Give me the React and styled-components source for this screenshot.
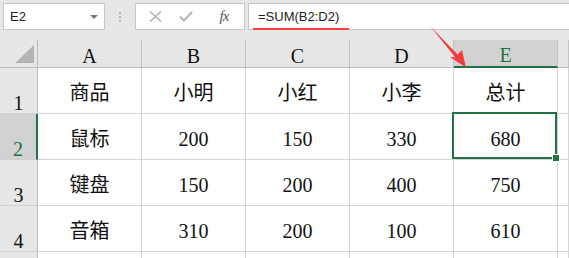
import React from 'react';
import styled, { createGlobalStyle, css } from 'styled-components';

const GlobalStyle = createGlobalStyle`
  html, body {
    margin: 0;
    padding: 0;
    background: #ffffff;
  }
`;

const GREEN = '#217346';
const CELL_FONT = `"Liberation Serif", "Noto Sans CJK SC", serif`;

// Page frame
const Sheet = styled.div`
  position: relative;
  width: 569px;
  height: 258px;
  overflow: hidden;
  background: #e6e6e6;
  font-family: "Liberation Sans", "Noto Sans CJK SC", sans-serif;
`;

// Name box + formula bar
const Toolbar = styled.div`
  display: flex;
  align-items: flex-start;
  height: 40px;
  padding: 3px 0 0 3px;
  box-sizing: border-box;
`;

const NameBox = styled.div`
  display: flex;
  align-items: center;
  justify-content: space-between;
  width: 102px;
  height: 27px;
  box-sizing: border-box;
  padding: 0 6px 0 6px;
  background: #fff;
  border: 1px solid #c6c6c6;
  font-size: 13px;
  color: #222;
`;

const Divider = styled.div`
  display: flex;
  flex-direction: column;
  align-items: center;
  gap: 2px;
  width: 30px;
  padding-top: 9px;
`;

const Dot = styled.span`
  width: 2px;
  height: 2px;
  background: #b4b4b4;
`;

const ButtonBox = styled.div`
  display: flex;
  align-items: center;
  width: 110px;
  height: 27px;
  box-sizing: border-box;
  padding-left: 9px;
  background: #fff;
  border: 1px solid #c6c6c6;
`;

const IconSlot = styled.span`
  display: flex;
  align-items: center;
  justify-content: center;
  width: ${p => p.$w}px;
  height: 25px;
`;

const Fx = styled.span`
  font-family: "Liberation Serif", serif;
  font-style: italic;
  font-size: 15px;
  color: #555;
  letter-spacing: -1px;
`;

const FormulaBox = styled.div`
  position: relative;
  flex: 1;
  display: flex;
  align-items: center;
  height: 27px;
  box-sizing: border-box;
  margin-left: 3px;
  margin-right: -4px;
  padding-left: 9px;
  background: #fff;
  border: 1px solid #c6c6c6;
  font-size: 13px;
  color: #222;
`;

// red annotation under the formula
const Underline = styled.span`
  position: absolute;
  left: 4px;
  top: 24px;
  width: 96px;
  height: 2px;
  background: #ff3f3f;
`;

// Worksheet grid
const Grid = styled.div`
  display: grid;
  grid-template-columns: 38px repeat(5, 104px) 1fr;
  grid-template-rows: 28px repeat(5, 46px);
  height: 218px;
  overflow: hidden;
  background: #fff;
`;

const Corner = styled.div`
  background: #e6e6e6;
  border-right: 1px solid #bdbdbd;
  border-bottom: 1px solid #bdbdbd;
  box-sizing: border-box;
`;

const ColHeader = styled.div`
  display: flex;
  align-items: center;
  justify-content: center;
  padding-top: 4px;
  box-sizing: border-box;
  background: #e6e6e6;
  border-right: 1px solid #c3c3c3;
  border-bottom: 1px solid #bdbdbd;
  font-family: ${CELL_FONT};
  font-size: 20px;
  line-height: 20px;
  color: #111;
  ${p => p.$active && css`
    background: #d2d2d2;
    color: ${GREEN};
    border-bottom: 2px solid ${GREEN};
  `}
`;

const RowHeader = styled.div`
  display: flex;
  align-items: flex-end;
  justify-content: center;
  box-sizing: border-box;
  background: #e6e6e6;
  border-right: 1px solid #bdbdbd;
  border-bottom: 1px solid #cfcfcf;
  font-family: ${CELL_FONT};
  font-size: 20px;
  line-height: 20px;
  color: #111;
  ${p => p.$active && css`
    background: #d2d2d2;
    color: ${GREEN};
    border-right: 2px solid ${GREEN};
  `}
`;

const Cell = styled.div`
  position: relative;
  display: flex;
  align-items: center;
  justify-content: center;
  padding-top: 4px;
  box-sizing: border-box;
  border-right: 1px solid #d4d4d4;
  border-bottom: 1px solid #d4d4d4;
  font-family: ${CELL_FONT};
  font-size: 20px;
  line-height: 22px;
  color: #111;
  ${p => p.$selected && css`
    &::after {
      content: '';
      position: absolute;
      top: -2px;
      left: -2px;
      right: 0;
      bottom: 0;
      border: 2px solid ${GREEN};
      z-index: 2;
    }
  `}
`;

const Handle = styled.span`
  position: absolute;
  right: -3px;
  bottom: -3px;
  width: 6px;
  height: 6px;
  background: ${GREEN};
  border: 1px solid #fff;
  z-index: 3;
`;

const Arrow = styled.svg`
  position: absolute;
  left: 0;
  top: 0;
  pointer-events: none;
  z-index: 5;
`;

const columns = ['A', 'B', 'C', 'D', 'E'];
const rows = [
  ['商品', '小明', '小红', '小李', '总计'],
  ['鼠标', '200', '150', '330', '680'],
  ['键盘', '150', '200', '400', '750'],
  ['音箱', '310', '200', '100', '610'],
];

const App = () => {
  return (
    <Sheet>
      <GlobalStyle />
      <Toolbar>
        <NameBox>
          <span>E2</span>
          <svg width="8" height="4" viewBox="0 0 8 4">
            <polygon points="0,0 8,0 4,4" fill="#777" />
          </svg>
        </NameBox>
        <Divider>
          <Dot />
          <Dot />
          <Dot />
        </Divider>
        <ButtonBox>
          <IconSlot $w={21}>
            <svg width="13" height="11" viewBox="0 0 13 11">
              <path d="M1 0.5 L12 10.5 M12 0.5 L1 10.5" stroke="#b3b3b3" strokeWidth="1.6" />
            </svg>
          </IconSlot>
          <IconSlot $w={40}>
            <svg width="14" height="11" viewBox="0 0 14 11">
              <path d="M1 5.5 L5 9.5 L13 1" stroke="#b3b3b3" strokeWidth="2" fill="none" />
            </svg>
          </IconSlot>
          <IconSlot $w={36}>
            <Fx>fx</Fx>
          </IconSlot>
        </ButtonBox>
        <FormulaBox>
          =SUM(B2:D2)
          <Underline />
        </FormulaBox>
      </Toolbar>

      <Grid>
        <Corner>
          <svg width="38" height="28" viewBox="0 0 38 28" style={{ display: 'block' }}>
            <polygon points="34,5 34,23 15,23" fill="#b4b4b4" />
          </svg>
        </Corner>
        {columns.map(c => (
          <ColHeader key={c} $active={c === 'E'}>{c}</ColHeader>
        ))}
        <ColHeader />
        {rows.map((row, r) => (
          <React.Fragment key={r}>
            <RowHeader $active={r === 1}>{r + 1}</RowHeader>
            {row.map((v, c) => {
              const selected = r === 1 && c === 4;
              return (
                <Cell key={c} $selected={selected}>
                  {v}
                  {selected && <Handle />}
                </Cell>
              );
            })}
            <Cell />
          </React.Fragment>
        ))}
        {/* partly visible empty row below the data */}
        <RowHeader />
        {columns.map(c => <Cell key={c} />)}
        <Cell />
      </Grid>

      <Arrow width="569" height="258" viewBox="0 0 569 258">
        <polygon
          points="430,26 457.5,54.5 462,50 466,67.5 450,57 455.3,57.3"
          fill="#f53c3c"
        />
      </Arrow>
    </Sheet>
  );
};

export default App;
